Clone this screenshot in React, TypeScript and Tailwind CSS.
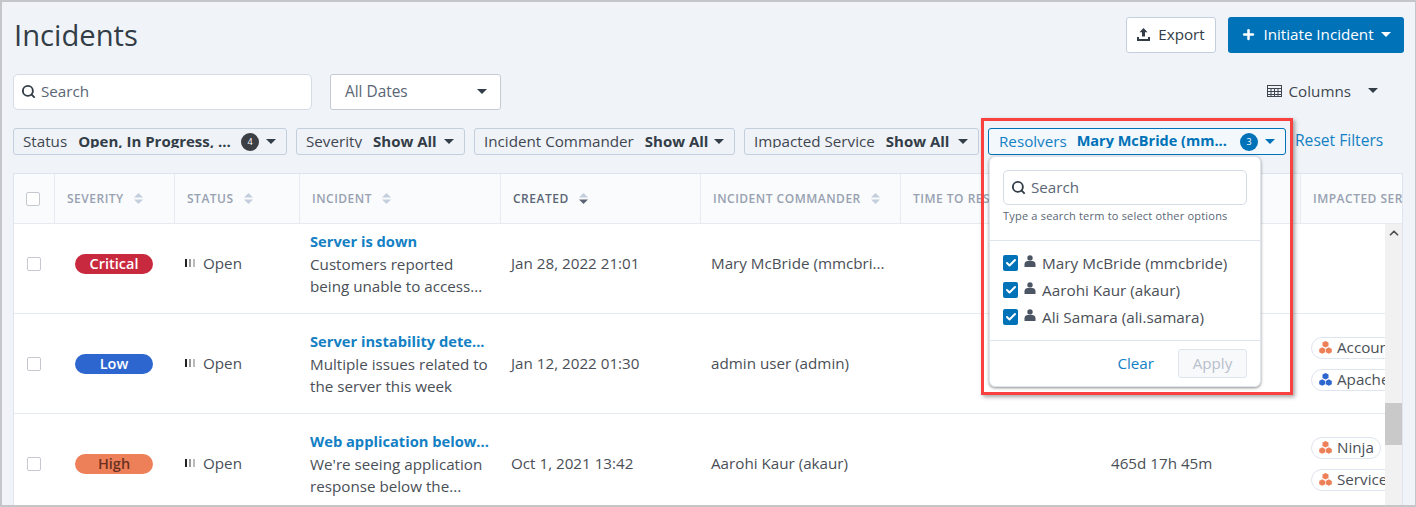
import React from 'react';
import { Search, Plus, ChevronUp, Check } from 'lucide-react';

const Caret: React.FC<{ className?: string }> = ({ className = 'text-[#333d47]' }) => (
  <svg width="10" height="5" viewBox="0 0 10 5" className={`shrink-0 fill-current ${className}`}>
    <path d="M0 0h10L5 5z" />
  </svg>
);

const Sort: React.FC<{ sorted?: boolean }> = ({ sorted }) => (
  <svg width="9" height="11" viewBox="0 0 9 11" className="shrink-0">
    <path d="M4.5 0 9 4.5H0z" fill="#c3cfdd" />
    <path d="M0 6.500h9L4.500 11z" fill={sorted ? '#5a6675' : '#c3cfdd'} />
  </svg>
);

const Cubes: React.FC<{ className: string }> = ({ className }) => (
  <svg width="13" height="13" viewBox="0 0 13 13" className={`shrink-0 fill-current ${className}`}>
    <path d="M6.500 0 9.500 1.600v3.300L6.500 6.500 3.500 4.900V1.600z" />
    <path d="M3.200 6.300 6.200 7.900v3.300L3.200 12.800 .2 11.200V7.900z" />
    <path d="M9.800 6.300l3 1.600v3.300l-3 1.600-3-1.600V7.900z" />
  </svg>
);

const Person: React.FC = () => (
  <svg width="12" height="12" viewBox="0 0 12 12" className="fill-[#4b5563] shrink-0">
    <circle cx="6" cy="2.900" r="2.700" />
    <path d="M0.500 12V9.200C0.500 7.200 2.200 6 3.800 6h4.400c1.600 0 3.300 1.200 3.300 3.200V12z" />
  </svg>
);

const ExportIcon: React.FC = () => (
  <svg width="13" height="13" viewBox="0 0 13 13" className="fill-[#333d47] shrink-0">
    <path d="M6.500 0 10.500 4.200H8V8.500H5V4.200H2.500z" />
    <path d="M0 9h2v2h9V9h2v4H0z" />
  </svg>
);

const ColumnsIcon: React.FC = () => (
  <svg width="15" height="12" viewBox="0 0 15 12" className="shrink-0 stroke-[#3f4650]" fill="none" strokeWidth="1">
    <rect x="0.500" y="0.500" width="14" height="11" />
    <path d="M0 3.500h15M0 6.500h15M0 9.500h15M4 3v9M7.500 3v9M11 3v9" />
  </svg>
);

// values in these pills are clipped at the bottom, same as the real page
const FilterPill: React.FC<{ label: string; value: string; width: string; badge?: string }> = ({ label, value, width, badge }) => (
  <div className={`flex items-center h-[27px] ${width} shrink-0 pl-[9px] pr-[10px] rounded-[3px] border border-[#c3cfdd] bg-[#eff3f8] text-[#3f4650]`}>
    <div className="flex self-start h-[19px] overflow-hidden leading-[24px] whitespace-nowrap text-[15.2px]">
      <span>{label}</span>
      <span className="ml-[11px] font-bold text-[15px] text-[#333d47]">{value}</span>
    </div>
    {badge && (
      <span className="ml-auto mr-[7px] flex items-center justify-center w-[18px] h-[18px] rounded-full bg-[#3c3f44] text-white text-[9px]">{badge}</span>
    )}
    <span className={badge ? '' : 'ml-auto'}>
      <Caret />
    </span>
  </div>
);

const HeaderCell: React.FC<{ label: string; dark?: boolean }> = ({ label, dark }) => (
  <div className="flex items-center gap-[10px] pl-[12px] h-full border-l border-[#e6ebf1] overflow-hidden">
    <span className={`whitespace-nowrap text-[12px] font-semibold tracking-[0.5px] ${dark ? 'text-[#5a6675]' : 'text-[#97a1b1]'}`}>{label}</span>
    <Sort sorted={dark} />
  </div>
);

const CheckBox: React.FC = () => (
  <span className="block w-[14px] h-[14px] rounded-[2px] border border-[#c5c9cf] bg-white" />
);

const Service: React.FC<{ name: string; color: string; cut?: boolean }> = ({ name, color, cut }) => (
  <div className={`flex items-center gap-[5px] h-[22px] pl-[7px] pr-[6px] border border-[#dfe5ee] rounded-full bg-white text-[15.2px] text-[#4a4f57] ${cut ? 'w-[100px]' : 'w-fit'}`}>
    <Cubes className={color} />
    <span className="whitespace-nowrap">{name}</span>
  </div>
);

type Row = {
  severity: string;
  sevClass: string;
  title: string;
  lines: [string, string];
  created: string;
  commander: string;
  open?: string;
  services?: { name: string; color: string; cut?: boolean }[];
};

const rows: Row[] = [
  {
    severity: 'Critical',
    sevClass: 'bg-[#c8293f] text-white',
    title: 'Server is down',
    lines: ['Customers reported', 'being unable to access...'],
    created: 'Jan 28, 2022 21:01',
    commander: 'Mary McBride (mmcbri...',
  },
  {
    severity: 'Low',
    sevClass: 'bg-[#2d66cf] text-white',
    title: 'Server instability dete...',
    lines: ['Multiple issues related to', 'the server this week'],
    created: 'Jan 12, 2022 01:30',
    commander: 'admin user (admin)',
    services: [
      { name: 'Accounting', color: 'text-[#ee8059]', cut: true },
      { name: 'Apache', color: 'text-[#2d66cf]', cut: true },
    ],
  },
  {
    severity: 'High',
    sevClass: 'bg-[#ee8059] text-[#6b3020]',
    title: 'Web application below...',
    lines: ["We're seeing application", 'response below the...'],
    created: 'Oct 1, 2021 13:42',
    commander: 'Aarohi Kaur (akaur)',
    open: '465d 17h 45m',
    services: [
      { name: 'Ninja', color: 'text-[#ee8059]' },
      { name: 'Service', color: 'text-[#ee8059]', cut: true },
    ],
  },
];

const grid = 'grid grid-cols-[40px_120px_125px_201px_200px_200px_200px_200px_200px]';

const ResolverPopup: React.FC = () => (
  <div className="absolute left-[987px] top-[154px] w-[272px] h-[231px] bg-white rounded-[6px] border border-[#dfe5ee] shadow-[0_1px_3px_rgba(0,0,0,0.45)] flex flex-col z-10">
    <div className="px-[13px] pt-[13px] h-[84px] border-b border-[#dfe5ee]">
      <div className="flex items-center h-[35px] pl-[7px] rounded-[5px] border border-[#d5dce6]">
        <Search size={15} strokeWidth={3} className="text-[#333d47]" />
        <span className="ml-[5px] text-[15.2px] text-[#5a6675]">Search</span>
      </div>
      <div className="mt-[3px] text-[11px] tracking-[0.2px] text-[#5a6675] whitespace-nowrap">Type a search term to select other options</div>
    </div>
    <div className="px-[13px] pt-[11px] h-[100px] border-b border-[#dfe5ee] flex flex-col gap-[5px]">
      {['Mary McBride (mmcbride)', 'Aarohi Kaur (akaur)', 'Ali Samara (ali.samara)'].map((n) => (
        <div key={n} className="flex items-center h-[22px]">
          <span className="flex items-center justify-center w-[15px] h-[16px] rounded-[2px] bg-[#0072b8]">
            <Check size={12} strokeWidth={4} className="text-white" />
          </span>
          <span className="ml-[6px] -mt-[5px]"><Person /></span>
          <span className="ml-[6px] text-[15.3px] text-[#4a4f57] whitespace-nowrap">{n}</span>
        </div>
      ))}
    </div>
    <div className="flex-1 flex items-center justify-end pr-[13px] gap-[24px]">
      <span className="text-[15.2px] text-[#1480c4]">Clear</span>
      <span className="flex items-center justify-center w-[69px] h-[29px] rounded-[3px] border border-[#dfe5ee] bg-[#f8f9fb] text-[15.2px] text-[#b7c0cc]">Apply</span>
    </div>
  </div>
);

const App: React.FC = () => {
  return (
    <div className="relative w-[1416px] h-[507px] overflow-hidden border-l-2 border-t-2 border-b-2 border-r border-[#c4c6ca] bg-[#f0f4f8] px-[11px] font-['Open_Sans',sans-serif] text-[#4a4f57]">
      {/* title row */}
      <div className="flex items-center h-[36px] mt-[15px]">
        <h1 className="ml-[1px] pt-[2px] text-[29.2px] leading-none text-[#333d47]">Incidents</h1>
        <div className="ml-auto flex gap-[12px]">
          <div className="flex items-center justify-center gap-[8px] w-[90px] h-[36px] pb-[2px] bg-white rounded-[3px] border border-[#c3cfdd] text-[15.2px] text-[#333d47]">
            <ExportIcon />
            Export
          </div>
          <div className="flex items-center justify-center gap-[7px] w-[176px] h-[36px] pb-[2px] bg-[#0072b8] rounded-[3px] text-[15.2px] text-white">
            <Plus size={15} strokeWidth={4} />
            Initiate Incident
            <Caret className="text-white" />
          </div>
        </div>
      </div>
      {/* search row */}
      <div className="flex items-center h-[36px] mt-[21px]">
        <div className="flex items-center w-[299px] h-[36px] pl-[7px] pb-[2px] bg-white rounded-[5px] border border-[#d5dce6]">
          <Search size={15} strokeWidth={3} className="text-[#333d47]" />
          <span className="ml-[5px] text-[15.2px] text-[#5a6675]">Search</span>
        </div>
        <div className="flex items-center ml-[18px] w-[171px] h-[36px] pl-[14px] pr-[13px] pb-[1px] bg-white rounded-[3px] border border-[#c5cad2] text-[15.4px] text-[#5a6675]">
          All Dates
          <span className="ml-auto"><Caret /></span>
        </div>
        <div className="ml-auto mr-[26px] flex items-center pb-[2px] text-[15.2px] text-[#3f4650]">
          <ColumnsIcon />
          <span className="ml-[7px]">Columns</span>
          <span className="ml-[17px]"><Caret /></span>
        </div>
      </div>
      {/* filter row */}
      <div className="flex items-center gap-[9px] mt-[18px]">
        <FilterPill label="Status" value="Open, In Progress, ..." width="w-[274px]" badge="4" />
        <FilterPill label="Severity" value="Show All" width="w-[169px]" />
        <FilterPill label="Incident Commander" value="Show All" width="w-[261px]" />
        <FilterPill label="Impacted Service" value="Show All" width="w-[235px]" />
        <div className="flex items-center h-[27px] w-[298px] shrink-0 pl-[10px] pr-[10px] rounded-[3px] border border-[#0072b8] bg-[#f2f8fc] text-[#1480c4]">
          <div className="flex self-start h-[19px] overflow-hidden leading-[24px] whitespace-nowrap text-[15.2px]">
            <span>Resolvers</span>
            <span className="ml-[10px] font-bold text-[14.5px] text-[#0072b8]">Mary McBride (mm...</span>
          </div>
          <span className="ml-auto mr-[7px] flex items-center justify-center w-[18px] h-[18px] rounded-full bg-[#0072b8] text-white text-[9px]">3</span>
          <Caret className="text-[#0072b8]" />
        </div>
        <span className="pb-[2px] text-[15.6px] text-[#1480c4] whitespace-nowrap">Reset Filters</span>
      </div>
      {/* table */}
      <div className="mt-[18px] w-[1390px] h-[340px] border-l border-r border-t border-[#dfe5ee] bg-white overflow-hidden">
        <div className={`${grid} h-[50px] bg-[#fafbfc] border-b border-[#e6ebf1]`}>
          <div className="flex items-center pl-[12px]"><CheckBox /></div>
          <HeaderCell label="SEVERITY" />
          <HeaderCell label="STATUS" />
          <HeaderCell label="INCIDENT" />
          <HeaderCell label="CREATED" dark />
          <HeaderCell label="INCIDENT COMMANDER" />
          <HeaderCell label="TIME TO RESOLVE" />
          <HeaderCell label="TIME TO RESPONSE" />
          <HeaderCell label="IMPACTED SERVICES" />
        </div>
        <div className="flex h-[290px]">
          <div className="flex-1 overflow-hidden">
            <div className="-mt-[10px]">
              {rows.map((r) => (
                <div key={r.title} className={`${grid} h-[100px] border-b border-[#e6ebf1] items-center`}>
                  <div className="pl-[13px]"><CheckBox /></div>
                  <div className="pl-[21px]">
                    <span className={`flex items-center justify-center w-[78px] h-[20px] rounded-full text-[14.5px] font-semibold ${r.sevClass}`}>{r.severity}</span>
                  </div>
                  <div className="flex items-center pl-[11px] text-[15.2px]">
                    <span className="flex gap-[2px]">
                      <span className="w-[2px] h-[8px] bg-[#222]" />
                      <span className="w-[2px] h-[8px] bg-[#999]" />
                      <span className="w-[2px] h-[8px] bg-[#bbb]" />
                    </span>
                    <span className="ml-[8px]">Open</span>
                  </div>
                  <div className="pl-[11px] text-[15.2px]">
                    <div className="leading-[20px] mb-[2px] text-[14.7px] font-bold text-[#1480c4] whitespace-nowrap">{r.title}</div>
                    <div className="leading-[22px] whitespace-nowrap">{r.lines[0]}</div>
                    <div className="leading-[22px] whitespace-nowrap">{r.lines[1]}</div>
                  </div>
                  <div className="pl-[11px] text-[15.2px] whitespace-nowrap">{r.created}</div>
                  <div className="pl-[11px] text-[15.2px] whitespace-nowrap">{r.commander}</div>
                  <div />
                  <div className="pl-[11px] text-[15.2px] whitespace-nowrap">{r.open}</div>
                  <div className="pl-[11px] flex flex-col gap-[10px]">
                    {r.services?.map((s) => <Service key={s.name} {...s} />)}
                  </div>
                </div>
              ))}
            </div>
          </div>
          <div className="w-[17px] shrink-0 bg-[#f1f1f1] flex flex-col">
            <div className="h-[17px] flex items-center justify-center"><ChevronUp size={14} strokeWidth={3} className="text-[#505050]" /></div>
            <div className="mt-[162px] h-[42px] bg-[#c9c9c9]" />
          </div>
        </div>
      </div>
      <ResolverPopup />
      {/* red annotation frame */}
      <div className="absolute left-[979px] top-[116px] w-[312px] h-[277px] border-[3px] border-[#f9423f] shadow-[2px_2px_4px_rgba(0,0,0,0.35)] pointer-events-none z-20" />
    </div>
  );
};

export default App;
